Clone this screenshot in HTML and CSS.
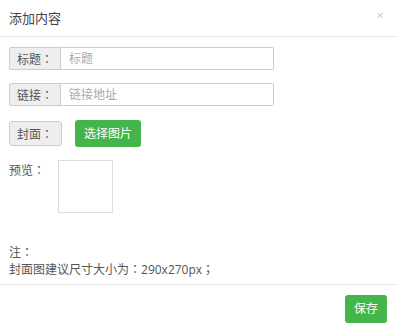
FILE: index.html
```html
<!DOCTYPE html>
<html lang="zh-CN">

<head>
    <meta charset="UTF-8">
    <meta name="viewport" content="width=device-width, initial-scale=1.0">
    <title>添加内容</title>
    <link rel="stylesheet" href="styles.css">
</head>

<body>
    <div class="modal">
        <div class="modal-header">
            <h4 class="modal-title">添加内容</h4>
            <span class="close">×</span>
        </div>
        <div class="modal-body">
            <div class="input-group">
                <span class="addon">标题<span class="punct" lang="zh-TW">：</span></span>
                <input type="text" class="field" placeholder="标题">
            </div>
            <div class="input-group">
                <span class="addon">链接<span class="punct" lang="zh-TW">：</span></span>
                <input type="text" class="field" placeholder="链接地址">
            </div>
            <div class="cover-row">
                <span class="addon addon-btn">封面<span class="punct" lang="zh-TW">：</span></span>
                <button class="btn btn-green">选择图片</button>
            </div>
            <div class="preview-row">
                <span class="preview-label">预览<span class="punct" lang="zh-TW">：</span></span>
                <div class="preview-box"></div>
            </div>
            <div class="note">
                <p>注<span class="punct" lang="zh-TW">：</span></p>
                <p>封面图建议尺寸大小为<span class="punct" lang="zh-TW">：</span>290x270px<span class="punct" lang="zh-TW">；</span></p>
            </div>
        </div>
        <div class="modal-footer">
            <button class="btn btn-green btn-save">保存</button>
        </div>
    </div>
</body>

</html>
```

FILE: styles.css
```css
body,
html {
    margin: 0;
    padding: 0;
    background: #fff;
    font-family: "Open Sans", "Noto Sans CJK SC", sans-serif;
    font-size: 12px;
    color: #555;
}

/* centred full-width punctuation, like the original font */
.punct {
    font-family: "Noto Sans CJK TC", sans-serif;
}

.modal {
    width: 397px;
    height: 330px;
    overflow: hidden;
}

.modal-header {
    height: 36px;
    padding: 0 9px;
    display: flex;
    align-items: center;
    justify-content: space-between;
    border-bottom: 1px solid #e5e5e5;
}

.modal-title {
    margin: 0;
    font-size: 13px;
    font-weight: normal;
    color: #444;
    line-height: 16px;
    margin-top: -1px;
}

.close {
    font-size: 13px;
    color: #c8c8c8;
    line-height: 14px;
    margin-right: 4px;
    margin-top: -7px;
}

.modal-body {
    padding: 10px 9px 7px;
}

.input-group {
    display: flex;
    width: 265px;
    height: 23px;
    margin-bottom: 13px;
}

.addon {
    box-sizing: border-box;
    width: 52px;
    height: 23px;
    line-height: 21px;
    padding: 0 0 0 7px;
    background: #eee;
    border: 1px solid #ccc;
    border-radius: 2px 0 0 2px;
    color: #555;
    white-space: nowrap;
}

.field {
    flex: 1;
    box-sizing: border-box;
    height: 23px;
    margin: 0;
    padding: 0 8px;
    border: 1px solid #ccc;
    border-left: none;
    border-radius: 0 2px 2px 0;
    font-family: inherit;
    font-size: 12px;
    color: #555;
    outline: none;
}

.field::placeholder {
    color: #aaa;
}

.cover-row {
    display: flex;
    align-items: center;
    gap: 13px;
    height: 27px;
    margin-top: 14px;
    margin-bottom: 13px;
}

.addon-btn {
    width: 53px;
    height: 25px;
    line-height: 23px;
    border-radius: 3px;
    padding: 0 0 0 7px;
}

.btn {
    border: none;
    border-radius: 3px;
    font-family: inherit;
    font-size: 12px;
    color: #fff;
    cursor: pointer;
    padding: 0 9px;
}

.btn-green {
    background-color: #44b549;
    height: 27px;
    line-height: 27px;
    width: 66px;
}

.preview-row {
    display: flex;
    align-items: flex-start;
}

.preview-label {
    width: 49px;
    line-height: 17px;
    margin-top: 1px;
}

.preview-box {
    box-sizing: border-box;
    width: 55px;
    height: 53px;
    border: 1px solid #ddd;
}

.note {
    margin-top: 30px;
}

.note p {
    margin: 0;
    height: 17px;
    line-height: 17px;
    color: #555;
}

.modal-footer {
    border-top: 1px solid #e5e5e5;
    padding: 10px 10px 0;
    display: flex;
    justify-content: flex-end;
}

.btn-save {
    width: 42px;
    height: 28px;
    line-height: 28px;
}
```
